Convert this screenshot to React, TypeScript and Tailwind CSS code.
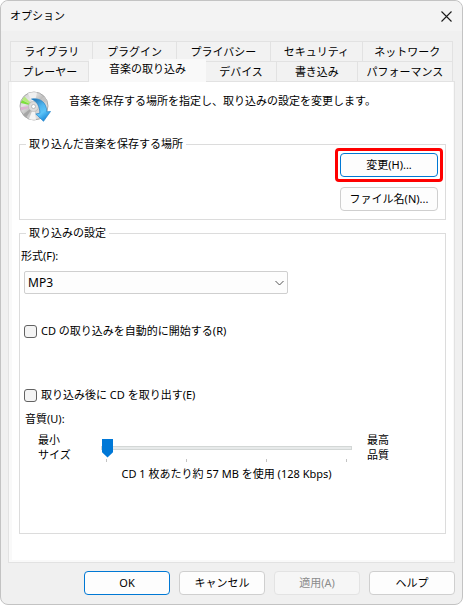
import clsx from "clsx";
import React, { useState } from "react";

const upperTabs = ["ライブラリ", "プラグイン", "プライバシー", "セキュリティ", "ネットワーク"];
const lowerTabs = ["プレーヤー", "音楽の取り込み", "デバイス", "書き込み", "パフォーマンス"];

const DiscIcon = () => (
  <svg className="h-8 w-8 shrink-0" viewBox="0 0 32 32" aria-hidden="true">
    <defs>
      <linearGradient id="disc" x1="0" y1="0" x2="1" y2="1">
        <stop offset="0" stopColor="#c4c4c4" />
        <stop offset="0.3" stopColor="#e4e4e4" />
        <stop offset="0.5" stopColor="#bdbdbd" />
        <stop offset="0.75" stopColor="#dedede" />
        <stop offset="1" stopColor="#a8a8a8" />
      </linearGradient>
      <linearGradient id="arrow" x1="0" y1="0" x2="0.6" y2="1">
        <stop offset="0" stopColor="#1a6cab" />
        <stop offset="0.45" stopColor="#4fb4ee" />
        <stop offset="0.7" stopColor="#5cc4f8" />
        <stop offset="1" stopColor="#1c8ada" />
      </linearGradient>
    </defs>
    <circle cx="15" cy="15" r="14" fill="url(#disc)" stroke="#9c9c9c" strokeWidth="0.8" />
    <path d="M15 15 9 2.5A14 14 0 0 1 18 1.5Z" fill="#f0f0f0" />
    <path d="M15 15 1.8 12A14 14 0 0 1 3 9Z" fill="#7de03c" />
    <path d="M15 15 3 9A14 14 0 0 1 5.5 5.500Z" fill="#b4e87e" />
    <path d="M15 15 1.4 16A14 14 0 0 0 2.200 19.5Z" fill="#dcb4d2" />
    <path d="M15 15 4 23.5A14 14 0 0 0 7 26.4Z" fill="#a5a5a5" />
    <path d="M15 15 10 28A14 14 0 0 0 17 28.7Z" fill="#f4f4f4" />
    <path d="M15 15 25 5.5A14 14 0 0 1 28 10Z" fill="#c4c4c4" />
    <circle cx="14.5" cy="15.500" r="5" fill="#dcdcdc" stroke="#b0b0b0" strokeWidth="0.6" />
    <circle cx="14.5" cy="15.500" r="2" fill="#fff" stroke="#a0a0a0" strokeWidth="0.6" />
    <path
      d="M12.500 8C21 6.500 27.800 11.500 27.800 20.800L31.500 20.500 24.500 30.300 16.800 23 20.800 22.200C21 16 18.500 10.800 12.500 8Z"
      fill="url(#arrow)"
      stroke="#2584c8"
      strokeWidth="0.7"
      strokeLinejoin="round"
    />
  </svg>
);

interface TabProps {
  label: string;
  active?: boolean;
}

const Tab = ({ label, active }: TabProps) => (
  <button
    type="button"
    role="tab"
    aria-selected={!!active}
    className={clsx(
      "whitespace-nowrap",
      active
        ? "relative -mt-0.5 -mb-px bg-[#f9f9f9] pb-1"
        : "h-5 border-t border-r border-[#e2e2e2] bg-[#f2f2f2] first:border-l"
    )}
  >
    {label}
  </button>
);

interface PushButtonProps extends React.ButtonHTMLAttributes<HTMLButtonElement> {
  accent?: boolean;
}

const PushButton = ({ accent, className, ...props }: PushButtonProps) => (
  <button
    type="button"
    className={clsx(
      "h-6 rounded border bg-[#fdfdfd] whitespace-nowrap disabled:border-[#e3e3e3] disabled:bg-[#f6f6f6] disabled:text-[#8c8c8c]",
      accent ? "border-[#0078d4]" : "border-[#cfcfcf]",
      className
    )}
    {...props}
  />
);

interface CheckFieldProps {
  id: string;
  label: string;
  className?: string;
}

const CheckField = ({ id, label, className }: CheckFieldProps) => (
  <div className={clsx("flex items-center gap-1 pl-1", className)}>
    <input
      id={id}
      type="checkbox"
      className="h-[13px] w-[13px] appearance-none rounded-[3px] border border-[#626262] bg-[#f4f4f4] checked:bg-[#0078d7]"
    />
    <label htmlFor={id}>{label}</label>
  </div>
);

const App = () => {
  const [format, setFormat] = useState("MP3");
  const [quality, setQuality] = useState(0);

  return (
    <div className="flex min-h-screen flex-col rounded-lg border border-[#c3c3c3] bg-[#f0f0f0] font-['Noto_Sans','Noto_Sans_CJK_JP',sans-serif] text-[11px] leading-4 text-black">
      {/* タイトルバー */}
      <header className="flex h-[30px] items-center justify-between rounded-t-lg bg-[#f3f3f3] pr-[10px] pl-[9px]">
        <h1>オプション</h1>
        <button type="button" aria-label="閉じる">
          <svg className="h-[11px] w-[11px]" viewBox="0 0 11 11" fill="none" stroke="#1a1a1a" strokeWidth="1.1">
            <path d="M.5.5l10 10M10.5.5l-10 10" />
          </svg>
        </button>
      </header>

      <main className="flex flex-1 flex-col px-[7px] pt-[10px]">
        {/* タブ */}
        <div role="tablist" className="px-0.5">
          <div className="grid grid-cols-[83fr_83fr_94fr_91fr_90fr]">
            {upperTabs.map((label) => (
              <Tab key={label} label={label} />
            ))}
          </div>
          <div className="grid grid-cols-[79fr_116fr_71fr_80fr_95fr]">
            {lowerTabs.map((label) => (
              <Tab key={label} label={label} active={label === "音楽の取り込み"} />
            ))}
          </div>
        </div>

        <section className="flex flex-1 border border-[#e2e2e2] bg-[#f9f9f9] pr-px pb-0.5 pl-[3px]">
          <div className="flex-1 bg-white px-[7px] pb-6">
            <div className="flex items-start gap-[18px] pt-[9px]">
              <DiscIcon />
              <p className="pt-0.5">音楽を保存する場所を指定し、取り込みの設定を変更します。</p>
            </div>

            {/* 保存場所 */}
            <fieldset className="mt-[13px] border border-[#dcdcdc] pr-0.5 pb-2">
              <legend className="ml-1.5 px-[3px]">取り込んだ音楽を保存する場所</legend>
              <div className="-mt-1 flex flex-col items-end gap-[5px]">
                <div className="flex w-[108px] rounded-sm border-3 border-[#ff0000] p-0.5">
                  <PushButton accent className="flex-1">変更(H)...</PushButton>
                </div>
                <PushButton className="mr-[5px] w-[98px]">ファイル名(N)...</PushButton>
              </div>
            </fieldset>

            {/* 取り込みの設定 */}
            <fieldset className="mt-[5px] border border-[#dcdcdc] pb-[51px]">
              <legend className="ml-1.5 px-[3px]">取り込みの設定</legend>
              <label htmlFor="format" className="block pt-[7px] pl-px">
                形式(F):
              </label>
              <div className="relative mt-[7px] ml-1 max-w-[264px]">
                <select
                  id="format"
                  value={format}
                  onChange={(e) => setFormat(e.target.value)}
                  className="h-[23px] w-full appearance-none rounded-xs border border-[#cfcfcf] bg-[#fdfdfd] px-[3px] text-xs"
                >
                  <option value="MP3">MP3</option>
                </select>
                <svg
                  className="pointer-events-none absolute top-2 right-1 h-2 w-[9px]"
                  viewBox="0 0 9 8"
                  fill="none"
                  stroke="#555"
                >
                  <path d="M.5 2l4 4 4-4" />
                </svg>
              </div>

              <CheckField id="auto-rip" label="CD の取り込みを自動的に開始する(R)" className="mt-[29px]" />
              <CheckField id="eject" label="取り込み後に CD を取り出す(E)" className="mt-12" />

              <label htmlFor="quality" className="mt-2 block pl-[5px]">
                音質(U):
              </label>
              <div className="mt-[5px] flex items-start pr-[56px] pl-[18px] leading-[15px]">
                <span className="w-[63px] shrink-0">
                  最小
                  <br />
                  サイズ
                </span>
                <div className="flex-1 pt-1.5">
                  <input
                    id="quality"
                    type="range"
                    min={0}
                    max={3}
                    value={quality}
                    onChange={(e) => setQuality(Number(e.target.value))}
                    className="block h-[19px] w-full appearance-none bg-transparent [&::-webkit-slider-runnable-track]:h-1 [&::-webkit-slider-runnable-track]:border [&::-webkit-slider-runnable-track]:border-[#d3d7d6] [&::-webkit-slider-runnable-track]:bg-[#e7eaea] [&::-webkit-slider-thumb]:-mt-2 [&::-webkit-slider-thumb]:h-[19px] [&::-webkit-slider-thumb]:w-[11px] [&::-webkit-slider-thumb]:appearance-none [&::-webkit-slider-thumb]:bg-[#0078d7] [&::-webkit-slider-thumb]:[clip-path:polygon(0_0,100%_0,100%_72%,50%_100%,0_72%)]"
                  />
                  <div className="mt-0.5 flex justify-between px-[5px]">
                    {[0, 1, 2, 3].map((step) => (
                      <span key={step} className="h-[3px] w-px bg-[#c4c4c4]" />
                    ))}
                  </div>
                </div>
                <span className="ml-[15px] shrink-0">
                  最高
                  <br />
                  品質
                </span>
              </div>
              <p className="mt-1 pr-3 text-center">CD 1 枚あたり約 57 MB を使用 (128 Kbps)</p>
            </fieldset>
          </div>
        </section>
      </main>

      <footer className="flex justify-end gap-[9px] px-[7px] pt-2 pb-[9px]">
        <PushButton accent className="w-[86px]">OK</PushButton>
        <PushButton className="w-[86px]">キャンセル</PushButton>
        <PushButton className="w-[86px]" disabled>適用(A)</PushButton>
        <PushButton className="w-[86px]">ヘルプ</PushButton>
      </footer>
    </div>
  );
};

export default App;
